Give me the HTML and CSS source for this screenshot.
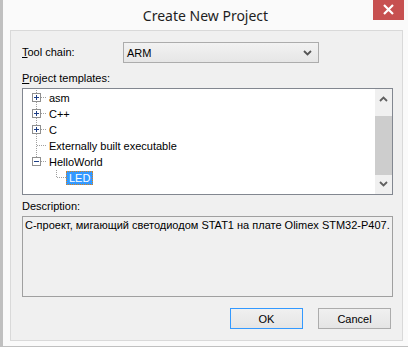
FILE: index.html
```html
<!DOCTYPE html>
<html>
<head>
<meta charset="utf-8">
<link rel="stylesheet" href="styles.css">
</head>
<body>
<div class="window">
  <div class="titlebar">
    <span></span>
    <span class="title">Create New Project</span>
    <span class="close"><svg width="31" height="20" viewBox="0 0 31 20"><path d="M11 5 L20 14 M20 5 L11 14" stroke="#fff" stroke-width="2.2"/></svg></span>
  </div>
  <div class="client">
    <div class="toolrow">
      <div class="lbl toollbl"><u>T</u>ool chain:</div>
      <div class="combo"><span class="combo-text">ARM</span><svg class="chev" width="9" height="6" viewBox="0 0 9 6"><path d="M1 1 L4.5 4.5 L8 1" stroke="#555" stroke-width="1.8" fill="none"/></svg></div>
    </div>
    <div class="lbl sec1"><u>P</u>roject templates:</div>
    <div class="listbox">
      <div class="tree">
        <div class="trow">
          <svg class="conn" width="24" height="16" viewBox="0 0 24 16"><path d="M13.5 0 V16" stroke="#a0a0a0" stroke-dasharray="1 1"/><path d="M18 7.5 H24" stroke="#a0a0a0" stroke-dasharray="1 1"/><rect x="9.5" y="3.5" width="8" height="8" fill="#fff" stroke="#8f8f8f"/><path d="M11 7.5 H16 M13.5 5 V10" stroke="#1e3f86"/></svg>
          <span class="tlabel">asm</span>
        </div>
        <div class="trow">
          <svg class="conn" width="24" height="16" viewBox="0 0 24 16"><path d="M13.5 0 V16" stroke="#a0a0a0" stroke-dasharray="1 1"/><path d="M18 7.5 H24" stroke="#a0a0a0" stroke-dasharray="1 1"/><rect x="9.5" y="3.5" width="8" height="8" fill="#fff" stroke="#8f8f8f"/><path d="M11 7.5 H16 M13.5 5 V10" stroke="#1e3f86"/></svg>
          <span class="tlabel">C++</span>
        </div>
        <div class="trow">
          <svg class="conn" width="24" height="16" viewBox="0 0 24 16"><path d="M13.5 0 V16" stroke="#a0a0a0" stroke-dasharray="1 1"/><path d="M18 7.5 H24" stroke="#a0a0a0" stroke-dasharray="1 1"/><rect x="9.5" y="3.5" width="8" height="8" fill="#fff" stroke="#8f8f8f"/><path d="M11 7.5 H16 M13.5 5 V10" stroke="#1e3f86"/></svg>
          <span class="tlabel">C</span>
        </div>
        <div class="trow">
          <svg class="conn" width="24" height="16" viewBox="0 0 24 16"><path d="M13.5 0 V16" stroke="#a0a0a0" stroke-dasharray="1 1"/><path d="M14 7.5 H24" stroke="#a0a0a0" stroke-dasharray="1 1"/></svg>
          <span class="tlabel">Externally built executable</span>
        </div>
        <div class="trow">
          <svg class="conn" width="24" height="16" viewBox="0 0 24 16"><path d="M13.5 0 V4" stroke="#a0a0a0" stroke-dasharray="1 1"/><path d="M18 7.5 H24" stroke="#a0a0a0" stroke-dasharray="1 1"/><rect x="9.5" y="3.5" width="8" height="8" fill="#fff" stroke="#8f8f8f"/><path d="M11 7.5 H16" stroke="#1e3f86"/></svg>
          <span class="tlabel">HelloWorld</span>
        </div>
        <div class="trow">
          <svg class="conn" width="43" height="16" viewBox="0 0 43 16"><path d="M33.5 0 V8" stroke="#a0a0a0" stroke-dasharray="1 1"/><path d="M34 7.5 H43" stroke="#a0a0a0" stroke-dasharray="1 1"/></svg>
          <span class="tlabel selected">LED</span>
        </div>
      </div>
      <div class="vscroll">
        <div class="sbtn"><svg width="9" height="6" viewBox="0 0 9 6"><path d="M1 5 L4.5 1.5 L8 5" stroke="#606060" stroke-width="1.8" fill="none"/></svg></div>
        <div class="thumb"></div>
        <div class="sbtn"><svg width="9" height="6" viewBox="0 0 9 6"><path d="M1 1 L4.5 4.5 L8 1" stroke="#606060" stroke-width="1.8" fill="none"/></svg></div>
      </div>
    </div>
    <div class="lbl sec2">Description:</div>
    <div class="desc">С-проект, мигающий светодиодом STAT1 на плате Olimex STM32-P407.</div>
    <div class="buttons">
      <div class="btn default">OK</div>
      <div class="btn">Cancel</div>
    </div>
  </div>
</div>
</body>
</html>
```

FILE: styles.css
```css
html, body {
  margin: 0;
  padding: 0;
  background: #ffffff;
}

.window {
  width: 408px;
  height: 347px;
  box-sizing: border-box;
  border-left: 3px solid #c0c0c0;
  border-bottom: 1px solid #c0c0c0;
  background: #fafafa;
  display: flex;
  flex-direction: column;
  overflow: hidden;
}

.titlebar {
  height: 30px;
  flex: none;
  display: grid;
  grid-template-columns: 1fr auto 1fr;
}

.title {
  font-family: "Noto Sans", "Open Sans", sans-serif;
  font-size: 14px;
  color: #1e1e1e;
  line-height: 32px;
  white-space: nowrap;
}

.close {
  justify-self: end;
  align-self: start;
  width: 31px;
  height: 20px;
  margin-right: 4px;
  background: #c75050;
  display: flex;
}

.client {
  margin-left: 7px;
  width: 393px;
  height: 311px;
  box-sizing: border-box;
  border: 1px solid #d9d9d9;
  background: #f0f0f0;
  padding: 11px 9px 0 11px;
  font-family: "Liberation Sans", Arial, sans-serif;
  font-size: 11px;
  color: #000;
  display: flex;
  flex-direction: column;
}

.lbl {
  line-height: 13px;
  height: 13px;
  white-space: nowrap;
}

.lbl u {
  text-decoration-thickness: 1px;
  text-underline-offset: 1px;
}

.toolrow {
  display: flex;
  align-items: center;
  height: 21px;
}

.toollbl {
  width: 101px;
  flex: none;
}

.combo {
  width: 196px;
  height: 21px;
  box-sizing: border-box;
  border: 1px solid #acacac;
  background: linear-gradient(#f2f2f2, #e6e6e6);
  display: flex;
  align-items: center;
  justify-content: space-between;
  padding: 0 6px 0 3px;
}

.chev {
  display: block;
}

.sec1 {
  margin-top: 9px;
  margin-bottom: 3px;
}

.listbox {
  height: 107px;
  box-sizing: border-box;
  border: 1px solid #828790;
  background: #fff;
  display: flex;
}

.tree {
  flex: 1;
  padding-top: 1px;
}

.trow {
  height: 16px;
  display: flex;
  align-items: center;
}

.conn {
  display: block;
  flex: none;
}

.tlabel {
  padding: 1px 2px;
  line-height: 12px;
  white-space: nowrap;
}

.tlabel.selected {
  background: #3399ff;
  color: #fff;
  outline: 1px dotted #d9821c;
  outline-offset: -1px;
  padding: 1px 3px;
}

.vscroll {
  width: 17px;
  flex: none;
  background: #f0f0f0;
  display: flex;
  flex-direction: column;
}

.sbtn {
  height: 17px;
  display: flex;
  align-items: center;
  justify-content: center;
}

.sbtn:first-child {
  height: 27px;
  align-items: flex-start;
  padding-top: 0;
  box-sizing: border-box;
}

.sbtn:first-child svg {
  margin-top: 7px;
}

.thumb {
  height: 59px;
  background: #cdcdcd;
}

.sec2 {
  margin-top: 5px;
  margin-bottom: 3px;
}

.desc {
  height: 81px;
  box-sizing: border-box;
  border: 1px solid #a0a0a0;
  background: #f0f0f0;
  padding: 2px 2px;
  line-height: 13px;
  white-space: nowrap;
  overflow: hidden;
}

.buttons {
  margin-top: 11px;
  display: flex;
  justify-content: flex-end;
  gap: 15px;
  padding-right: 2px;
}

.btn {
  width: 73px;
  height: 21px;
  box-sizing: border-box;
  border: 1px solid #acacac;
  background: linear-gradient(#f0f0f0, #e5e5e5);
  display: flex;
  align-items: center;
  justify-content: center;
}

.btn.default {
  border-color: #3399ff;
}
```
